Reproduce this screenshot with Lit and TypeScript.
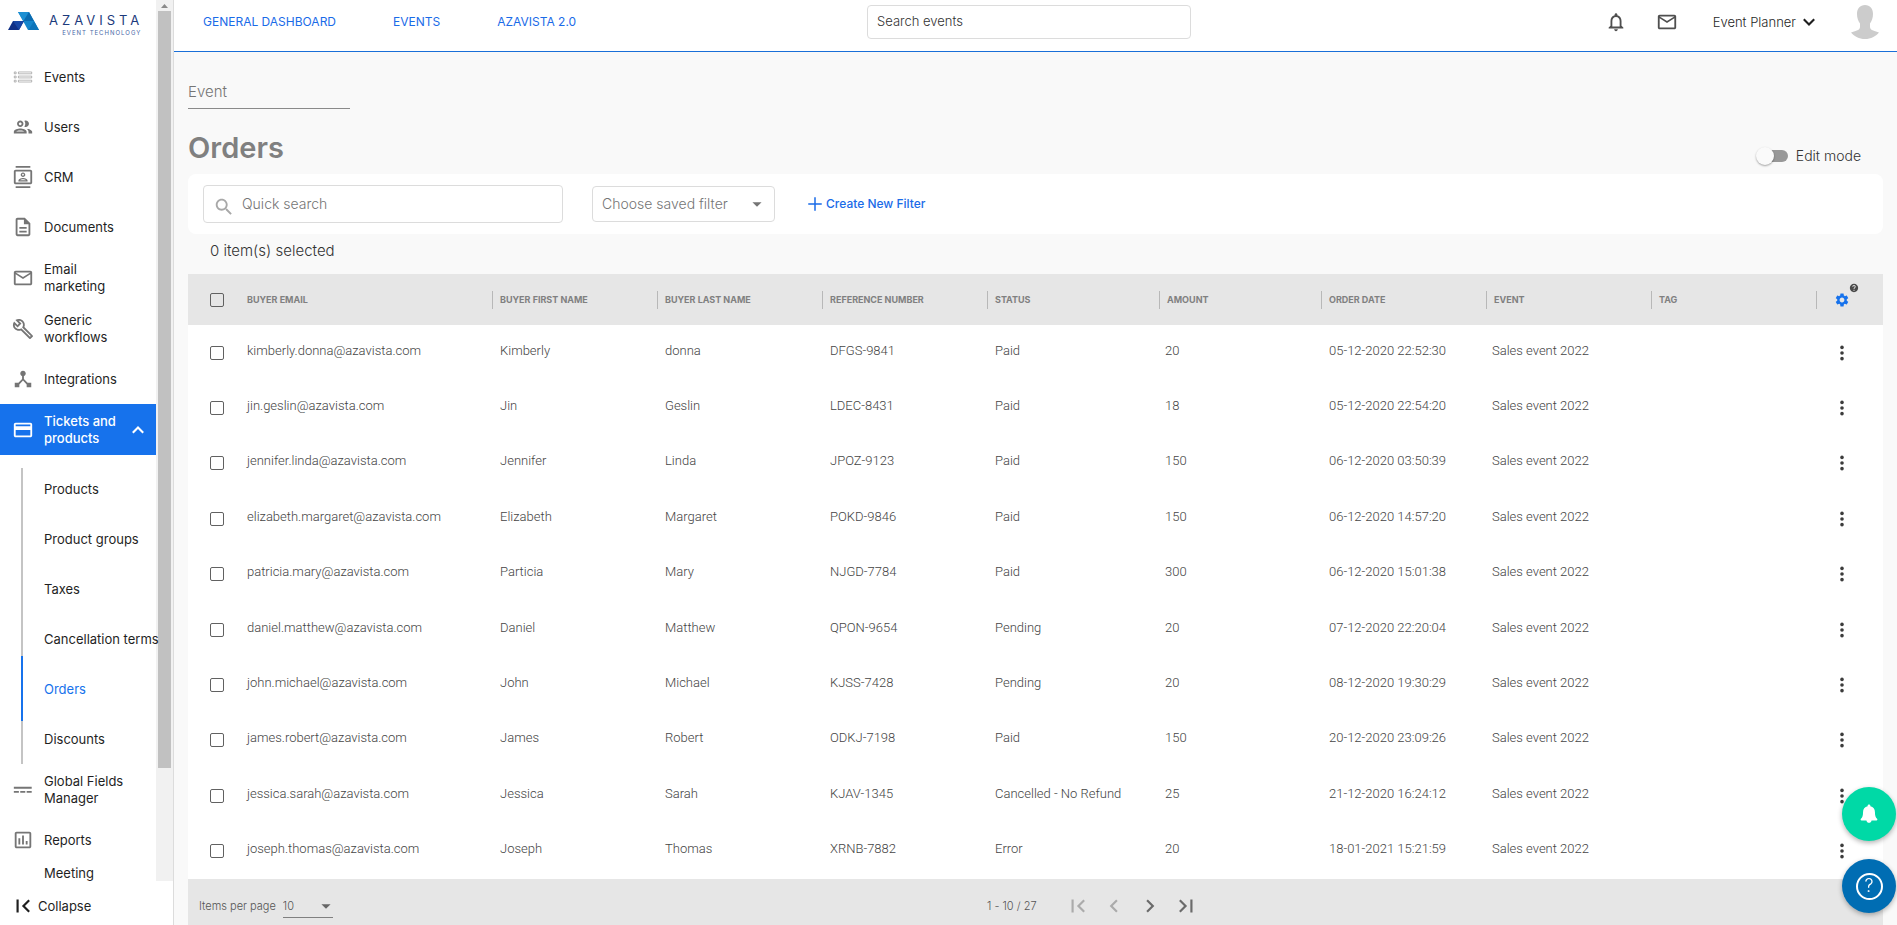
import { LitElement, html, css, svg, nothing } from "lit";
import { customElement, state } from "lit/decorators.js";
import { classMap } from "lit/directives/class-map.js";

type Order = [string, string, string, string, string, string, string];

const ORDERS: Order[] = [
  ["kimberly.donna@azavista.com", "Kimberly", "donna", "DFGS-9841", "Paid", "20", "05-12-2020 22:52:30"],
  ["jin.geslin@azavista.com", "Jin", "Geslin", "LDEC-8431", "Paid", "18", "05-12-2020 22:54:20"],
  ["jennifer.linda@azavista.com", "Jennifer", "Linda", "JPOZ-9123", "Paid", "150", "06-12-2020 03:50:39"],
  ["elizabeth.margaret@azavista.com", "Elizabeth", "Margaret", "POKD-9846", "Paid", "150", "06-12-2020 14:57:20"],
  ["patricia.mary@azavista.com", "Particia", "Mary", "NJGD-7784", "Paid", "300", "06-12-2020 15:01:38"],
  ["daniel.matthew@azavista.com", "Daniel", "Matthew", "QPON-9654", "Pending", "20", "07-12-2020 22:20:04"],
  ["john.michael@azavista.com", "John", "Michael", "KJSS-7428", "Pending", "20", "08-12-2020 19:30:29"],
  ["james.robert@azavista.com", "James", "Robert", "ODKJ-7198", "Paid", "150", "20-12-2020 23:09:26"],
  ["jessica.sarah@azavista.com", "Jessica", "Sarah", "KJAV-1345", "Cancelled - No Refund", "25", "21-12-2020 16:24:12"],
  ["joseph.thomas@azavista.com", "Joseph", "Thomas", "XRNB-7882", "Error", "20", "18-01-2021 15:21:59"],
];

const HEADERS = [
  "Buyer email",
  "Buyer first name",
  "Buyer last name",
  "Reference number",
  "Status",
  "Amount",
  "Order date",
  "Event",
  "Tag",
];

const PATHS = {
  events: svg`<g fill="none" stroke="currentColor" stroke-width="1" opacity=".55"><path d="M2.500 6.500h2v2h-2zM7 6.500h14.500v2H7zM2.500 11h2v2h-2zM7 11h14.500v2H7zM2.500 15.500h2v2h-2zM7 15.500h14.500v2H7z"/></g>`,
  users: svg`<path d="M9 13.750c-2.340 0-7 1.170-7 3.500V19h14v-1.750c0-2.330-4.660-3.500-7-3.500zM4.340 17c.84-.58 2.870-1.250 4.660-1.250s3.820.67 4.660 1.250H4.340zM9 12c1.930 0 3.500-1.570 3.500-3.500S10.930 5 9 5 5.500 6.570 5.500 8.500 7.070 12 9 12zm0-5c.83 0 1.500.67 1.500 1.500S9.830 10 9 10s-1.500-.67-1.500-1.500S8.170 7 9 7zm7.040 6.810c1.160.84 1.960 1.960 1.960 3.440V19h4v-1.750c0-2.020-3.500-3.170-5.960-3.440zM15 12c1.930 0 3.500-1.570 3.500-3.500S16.930 5 15 5c-.54 0-1.040.13-1.500.35.63.89 1 1.980 1 3.150s-.37 2.260-1 3.150c.46.22.96.35 1.500.35z"/>`,
  crm: svg`<path d="M20 4H4c-1.100 0-2 .9-2 2v12c0 1.100.9 2 2 2h16c1.100 0 2-.9 2-2V6c0-1.100-.9-2-2-2zm0 14H4V6h16v12zM4 0h16v2H4zm0 22h16v2H4zm8-10c1.380 0 2.500-1.120 2.500-2.500S13.380 7 12 7 9.500 8.120 9.500 9.500 10.620 12 12 12zm0-3.500c.55 0 1 .45 1 1s-.45 1-1 1-1-.45-1-1 .45-1 1-1zm5 7.490C17 13.900 13.690 13 12 13s-5 .9-5 2.990V17h10v-1.010zm-8.190-.49c.61-.52 2.030-1 3.190-1 1.170 0 2.590.48 3.200 1H8.810z"/>`,
  documents: svg`<path d="M8 16h8v2H8zm0-4h8v2H8zm6-10H6c-1.100 0-2 .9-2 2v16c0 1.100.89 2 1.990 2H18c1.100 0 2-.9 2-2V8l-6-6zm4 18H6V4h7v5h5v11z"/>`,
  mail: svg`<path d="M22 6c0-1.100-.9-2-2-2H4c-1.100 0-2 .9-2 2v12c0 1.100.9 2 2 2h16c1.100 0 2-.9 2-2V6zm-2 0-8 5-8-5h16zm0 12H4V8l8 5 8-5v10z"/>`,
  wrench: svg`<path d="m22.610 18.990-9.080-9.080c.93-2.340.45-5.100-1.440-7C9.790.61 6.210.4 3.660 2.260L7.500 6.110 6.080 7.520 2.250 3.690C.39 6.230.6 9.820 2.900 12.110c1.860 1.860 4.570 2.350 6.890 1.480l9.110 9.110c.39.39 1.020.39 1.410 0l2.300-2.300c.4-.38.4-1.010 0-1.410zm-3 1.600-9.460-9.460c-.61.45-1.290.72-2 .82-1.360.2-2.790-.21-3.830-1.250C3.370 9.760 2.930 8.500 3 7.260l3.090 3.090 4.240-4.240-3.090-3.090c1.240-.07 2.490.37 3.440 1.310 1.080 1.080 1.490 2.570 1.240 3.960-.12.71-.42 1.370-.88 1.960l9.450 9.450-.88.89z"/>`,
  hub: svg`<path d="m17 16-4-4V8.820C14.160 8.400 15 7.300 15 6c0-1.660-1.340-3-3-3S9 4.340 9 6c0 1.300.84 2.400 2 2.820V12l-4 4H3v5h5v-3.050l4-4.200 4 4.200V21h5v-5h-4z"/>`,
  card: svg`<path d="M20 4H4c-1.110 0-1.990.89-1.990 2L2 18c0 1.110.89 2 2 2h16c1.110 0 2-.89 2-2V6c0-1.110-.89-2-2-2zm0 14H4v-6h16v6zm0-10H4V6h16v2z"/>`,
  fields: svg`<path d="M2 8.500h19.500v2H2zM2 13h5.500v2H2zm7 0h5.500v2H9zm7 0h5.500v2H16z"/>`,
  reports: svg`<path d="M9 17H7v-7h2v7zm4 0h-2V7h2v10zm4 0h-2v-4h2v4zm2 2H5V5h14v14zm0-16H5c-1.100 0-2 .9-2 2v14c0 1.100.9 2 2 2h14c1.100 0 2-.9 2-2V5c0-1.100-.9-2-2-2z"/>`,
  bell: svg`<path d="M12 22c1.100 0 2-.9 2-2h-4c0 1.100.9 2 2 2zm6-6v-5c0-3.070-1.630-5.640-4.500-6.320V4c0-.83-.67-1.500-1.500-1.500s-1.500.67-1.500 1.500v.68C7.640 5.360 6 7.920 6 11v5l-2 2v1h16v-1l-2-2zm-2 1H8v-6c0-2.480 1.510-4.500 4-4.500s4 2.020 4 4.500v6z"/>`,
  bellSolid: svg`<path d="M12 1.500c-.9 0-1.500.6-1.500 1.500v.6C7.300 4.300 5.500 6.900 5.500 10c0 3.600-.7 5.700-2.300 7.100-.7.600-.3 1.900.6 1.900h5.400c.3 1.500 1.400 2.500 2.800 2.500s2.500-1 2.800-2.500h5.400c.9 0 1.300-1.300.6-1.900-1.600-1.400-2.300-3.500-2.300-7.100 0-3.100-1.800-5.700-5-6.400V3c0-.9-.6-1.500-1.500-1.500z"/>`,
  down: svg`<path d="M7.100 8.200 12 13.100l4.900-4.900L18.500 9.800 12 16.300 5.500 9.800z"/>`,
  up: svg`<path d="M7.100 15.800 12 10.900l4.900 4.900 1.600-1.600L12 7.700l-6.500 6.500z"/>`,
  caret: svg`<path d="m7 10 5 5 5-5z"/>`,
  search: svg`<path d="M15.500 14h-.79l-.28-.27C15.410 12.590 16 11.110 16 9.500 16 5.910 13.090 3 9.500 3S3 5.910 3 9.500 5.910 16 9.500 16c1.610 0 3.090-.59 4.230-1.570l.27.28v.79l5 4.990L20.490 19l-4.990-5zm-6 0C7.010 14 5 11.990 5 9.500S7.010 5 9.500 5 14 7.010 14 9.500 11.990 14 9.500 14z"/>`,
  plus: svg`<path d="M21 13h-8v8h-2v-8H3v-2h8V3h2v8h8z"/>`,
  gear: svg`<path d="M19.140 12.940c.04-.3.060-.61.060-.94 0-.32-.02-.64-.07-.94l2.030-1.580c.18-.14.23-.41.120-.61l-1.920-3.320c-.12-.22-.37-.29-.59-.22l-2.390.96c-.5-.38-1.030-.7-1.620-.94l-.36-2.540c-.04-.24-.24-.41-.48-.41h-3.840c-.24 0-.43.17-.47.41l-.36 2.540c-.59.24-1.130.57-1.620.94l-2.390-.96c-.22-.08-.47 0-.59.22L2.740 8.870c-.12.21-.08.47.120.61l2.030 1.580c-.05.3-.09.63-.09.94s.02.64.07.94l-2.030 1.580c-.18.14-.23.41-.12.61l1.920 3.320c.12.22.37.29.59.22l2.390-.96c.5.38 1.030.7 1.620.94l.36 2.540c.05.24.24.41.48.41h3.840c.24 0 .44-.17.47-.41l.36-2.540c.59-.24 1.130-.56 1.620-.94l2.390.96c.22.080.47 0 .59-.22l1.920-3.320c.12-.22.070-.47-.12-.61l-2.010-1.580zM12 15.600c-1.980 0-3.600-1.620-3.600-3.600s1.620-3.600 3.600-3.600 3.600 1.620 3.600 3.600-1.620 3.600-3.600 3.600z"/>`,
  help: svg`<path d="M12 2C6.480 2 2 6.480 2 12s4.480 10 10 10 10-4.480 10-10S17.520 2 12 2zm1 17h-2v-2h2v2zm2.070-7.750-.9.920C13.450 12.900 13 13.500 13 15h-2v-.5c0-1.100.45-2.100 1.170-2.830l1.240-1.260c.37-.36.59-.86.59-1.410 0-1.100-.9-2-2-2s-2 .9-2 2H8c0-2.210 1.790-4 4-4s4 1.790 4 4c0 .88-.36 1.680-.93 2.250z"/>`,
  dots: svg`<circle cx="12" cy="4.500" r="2.400"/><circle cx="12" cy="12" r="2.400"/><circle cx="12" cy="19.500" r="2.400"/>`,
  first: svg`<path d="M18.410 16.590 13.820 12l4.590-4.590L17 6l-6 6 6 6zM6 6h2v12H6z"/>`,
  prev: svg`<path d="M15.410 7.410 14 6l-6 6 6 6 1.410-1.410L10.830 12z"/>`,
  next: svg`<path d="M10 6 8.590 7.410 13.170 12l-4.580 4.590L10 18l6-6z"/>`,
  last: svg`<path d="M5.590 7.410 10.180 12l-4.590 4.590L7 18l6-6-6-6zM16 6h2v12h-2z"/>`,
};

const icon = (name: keyof typeof PATHS, size = "") =>
  html`<svg class="icon ${size}" viewBox="0 0 24 24" aria-hidden="true">${PATHS[name]}</svg>`;

const base = css`
  :host {
    font-family: Inter, "Open Sans", sans-serif;
    box-sizing: border-box;
  }
  *,
  *::before,
  *::after {
    box-sizing: border-box;
  }
  .icon {
    display: block;
    flex: none;
    width: 22px;
    height: 22px;
    fill: currentColor;
  }
  .icon.s10 { width: 10px; height: 10px; }
  .icon.s16 { width: 16px; height: 16px; }
  .icon.s18 { width: 18px; height: 18px; }
  .icon.s26 { width: 26px; height: 26px; }
  button,
  input,
  select {
    font: inherit;
    color: inherit;
    margin: 0;
    padding: 0;
    border: 0;
    background: none;
    outline: 0;
  }
  button { cursor: pointer; }
  a { color: inherit; text-decoration: none; }
  ul { list-style: none; margin: 0; padding: 0; }
`;

@customElement("side-nav")
class SideNav extends LitElement {
  static styles = [
    base,
    css`
      :host {
        display: flex;
        flex-direction: column;
        width: 174px;
        min-height: 0;
        background: #fff;
        border-right: 1px solid #dcdcdc;
        font-size: 13px;
        line-height: 17px;
        color: #1f1f1f;
      }
      .scroll { display: flex; flex: 1; min-height: 0; overflow: hidden; }
      .content { flex: 1; min-width: 0; }
      .logo {
        display: flex;
        align-items: flex-start;
        gap: 10px;
        height: 52px;
        padding: 12px 0 0 8px;
      }
      .mark { width: 31px; height: 18px; display: block; }
      .brand {
        display: flex;
        flex-direction: column;
        align-items: flex-end;
        color: #1c3a7c;
      }
      .name { font-size: 13px; line-height: 17px; letter-spacing: 4px; }
      .tag { padding-right: 2px; font-size: 6px; line-height: 7px; letter-spacing: 1px; color: #4a68a8; }
      .item {
        display: flex;
        align-items: center;
        gap: 10px;
        min-height: 50px;
        padding: 8px 20px 8px 12px;
      }
      .item.tall { min-height: 51px; }
      .item .icon { color: #757575; }
      .item .label { flex: 1; }
      .item.active { background: #1672ec; color: #fff; font-weight: 500; padding-right: 7px; }
      .item.active .icon { color: #fff; }
      .item.cut { align-items: flex-start; padding: 0 0 0 44px; }
      .sub { position: relative; padding-top: 9px; }
      .sub::before {
        content: "";
        position: absolute;
        left: 21px;
        top: 13px;
        bottom: 0;
        width: 2px;
        background: #c4c4c4;
      }
      .sub a {
        position: relative;
        display: flex;
        align-items: center;
        height: 50px;
        padding-left: 44px;
        white-space: nowrap;
      }
      .sub a.current { color: #1672ec; }
      .sub a.current::before {
        content: "";
        position: absolute;
        left: 21px;
        top: -8px;
        bottom: -7px;
        width: 2px;
        background: #1672ec;
      }
      .bar {
        display: flex;
        flex-direction: column;
        align-items: center;
        width: 17px;
        padding: 3px 2px 0;
        background: #f1f1f1;
      }
      .arrow { width: 7px; height: 8px; fill: #8a8a8a; display: block; }
      .track { flex: 1; width: 13px; }
      .thumb { height: 87%; background: #c1c1c1; }
      .collapse {
        display: flex;
        align-items: center;
        gap: 2px;
        height: 44px;
        padding: 6px 0 0 10px;
        text-align: left;
      }
    `,
  ];

  private item(name: keyof typeof PATHS, label: string, tall = false) {
    return html`<a class=${classMap({ item: true, tall })} href="#">${icon(name)}<span class="label">${label}</span></a>`;
  }

  render() {
    return html`
      <div class="scroll">
        <nav class="content">
          <a class="logo" href="#">
            <svg class="mark" viewBox="0 0 31 18" aria-hidden="true">
              <path fill="#1586cc" d="M10 0h11l10 18H20z" />
              <path fill="#1c8fd2" d="M10 0h11l-5.500 9z" />
              <path fill="#0a6bb0" d="M21 0l5 9H15.500z" />
              <path fill="#0a6bb0" d="M26 9l5 18H20z" opacity="0" />
              <path fill="#0d74ba" d="M26 9l5 9H20.500z" />
              <path fill="#0f2f86" d="M5 9h11l-5 9H0z" />
              <path fill="#1746a5" d="M5 9h11l-5 9z" />
            </svg>
            <span class="brand"><span class="name">AZAVISTA</span><span class="tag">EVENT TECHNOLOGY</span></span>
          </a>
          ${this.item("events", "Events")} ${this.item("users", "Users")} ${this.item("crm", "CRM")}
          ${this.item("documents", "Documents")} ${this.item("mail", "Email marketing", true)}
          ${this.item("wrench", "Generic workflows", true)} ${this.item("hub", "Integrations")}
          <a class="item tall active" href="#">${icon("card")}<span class="label">Tickets and products</span>${icon("up")}</a>
          <ul class="sub">
            ${["Products", "Product groups", "Taxes", "Cancellation terms", "Orders", "Discounts"].map(
              (t) => html`<li><a class=${classMap({ current: t === "Orders" })} href="#">${t}</a></li>`
            )}
          </ul>
          ${this.item("fields", "Global Fields Manager", true)} ${this.item("reports", "Reports")}
          <a class="item cut" href="#">Meeting</a>
        </nav>
        <div class="bar">
          <svg class="arrow" viewBox="0 0 7 8" aria-hidden="true"><path d="M0 5 3.500 1 7 5z" /></svg>
          <div class="track"><div class="thumb"></div></div>
        </div>
      </div>
      <button class="collapse">${icon("first", "s26")}Collapse</button>
    `;
  }
}

@customElement("top-bar")
class TopBar extends LitElement {
  static styles = [
    base,
    css`
      :host {
        display: grid;
        grid-template-columns: 665fr 324px 691fr;
        height: 52px;
        padding: 5px 16px 0 29px;
        background: #fff;
        border-bottom: 1px solid #1a6fd8;
        font-size: 13px;
        line-height: 34px;
        color: #1f1f1f;
      }
      .links { display: flex; gap: 57px; font-size: 12px; color: #1a6be8; }
      .search {
        height: 34px;
        padding: 0 9px 3px;
        border: 1px solid #dcdcdc;
        border-radius: 4px;
        font-weight: 300;
      }
      .search::placeholder { color: #333; opacity: 1; }
      .right { display: flex; justify-content: flex-end; align-items: center; height: 34px; }
      .right button { display: flex; align-items: center; }
      .round { color: #4f4f4f; }
      .mail { margin: 0 35px 0 29px; }
      .user { gap: 2px; margin-right: 29px; font-weight: 300; }
      .avatar { width: 32px; height: 36px; fill: #ccc; display: block; }
    `,
  ];
  render() {
    return html`
      <nav class="links"><a href="#">GENERAL DASHBOARD</a><a href="#">EVENTS</a><a href="#">AZAVISTA 2.0</a></nav>
      <input class="search" type="search" placeholder="Search events" aria-label="Search events" />
      <div class="right">
        <button class="round" aria-label="Notifications">${icon("bell")}</button>
        <button class="round mail" aria-label="Messages">${icon("mail")}</button>
        <button class="user">Event Planner ${icon("down")}</button>
        <svg class="avatar" viewBox="0 0 32 36" aria-hidden="true">
          <path d="M16 1c-5 0-8 3.500-8 9 0 4 1.200 7 3 9.500V23c0 2-1.500 3.200-4.500 4L2 28.500C5.500 32.500 10 35 16 35s10.500-2.500 14-6.500L25.500 27c-3-.8-4.500-2-4.500-4v-3.500c1.800-2.500 3-5.500 3-9.500 0-5.500-3-9-8-9z" />
        </svg>
      </div>
    `;
  }
}

@customElement("orders-table")
class OrdersTable extends LitElement {
  static styles = [
    base,
    css`
      :host {
        display: flex;
        flex-direction: column;
        flex: 1;
        min-height: 0;
        font-size: 13px;
        line-height: 18px;
        color: #444;
      }
      .body { flex: 1; min-height: 0; background: #fff; }
      table { width: 100%; height: 100%; table-layout: fixed; border-collapse: collapse; }
      .c-check { width: 59px; }
      .c-email { width: 245px; }
      .c-text { width: 165px; }
      .c-status { width: 172px; }
      .c-amount { width: 162px; }
      .c-act { width: 67px; }
      th, td { padding: 0; text-align: left; white-space: nowrap; font-weight: 300; }
      thead th { height: 51px; background: #e6e6e6; }
      tbody td { height: 55px; padding: 0 0 4px 8px; font-family: Roboto, Inter, sans-serif; }
      tbody .email { padding-left: 0; }
      tbody .near { padding-left: 6px; }
      tbody .pick, tbody .act { padding-bottom: 0; }
      .head {
        display: block;
        padding-left: 7px;
        border-left: 1px solid #b8b8b8;
        font-size: 9px;
        font-weight: 700;
        text-transform: uppercase;
        color: #808080;
      }
      .head.plain { padding-left: 0; border-left: 0; }
      .pick, tbody .pick { padding-left: 22px; }
      .box {
        appearance: none;
        display: block;
        width: 14px;
        height: 14px;
        border: 1px solid #616161;
        border-radius: 2px;
      }
      .box:checked { background: #1672ec; border-color: #1672ec; }
      .tools { display: flex; height: 18px; align-items: center; border-left: 1px solid #b8b8b8; padding-left: 17px; }
      .gear { position: relative; color: #1672ec; }
      .hint { position: absolute; left: 15px; top: -9px; color: #4a4a4a; }
      tbody .act { padding-left: 17px; }
      .menu { display: block; color: #3c3c3c; }
      footer {
        display: grid;
        grid-template-columns: 799fr 896fr;
        align-items: center;
        height: 46px;
        padding-top: 8px;
        background: #e6e6e6;
        font-size: 11px;
        font-weight: 300;
        color: #555;
      }
      .size { display: flex; align-items: center; gap: 7px; padding-left: 11px; }
      .drop { position: relative; display: block; width: 50px; border-bottom: 1px solid #808080; }
      .drop select { appearance: none; width: 100%; height: 22px; }
      .drop .icon { position: absolute; right: -4px; top: 0; pointer-events: none; color: #666; }
      .pager { display: flex; align-items: center; gap: 10px; }
      .pager button { color: #6b6b6b; }
      .pager button:disabled { color: #ababab; }
      .pager .range { margin-right: 18px; }
    `,
  ];
  render() {
    return html`
      <div class="body">
        <table>
          <colgroup>
            <col class="c-check" /><col class="c-email" /><col class="c-text" /><col class="c-text" /><col class="c-text" />
            <col class="c-status" /><col class="c-amount" /><col class="c-text" /><col class="c-text" /><col class="c-text" />
            <col class="c-act" />
          </colgroup>
          <thead>
            <tr>
              <th class="pick"><input class="box" type="checkbox" aria-label="Select all" /></th>
              ${HEADERS.map((h, i) => html`<th scope="col"><span class=${classMap({ head: true, plain: i === 0 })}>${h}</span></th>`)}
              <th>
                <div class="tools">
                  <button class="gear" aria-label="Table settings">
                    ${icon("gear", "s16")}<span class="hint">${icon("help", "s10")}</span>
                  </button>
                </div>
              </th>
            </tr>
          </thead>
          <tbody>
            ${ORDERS.map(
              ([email, first, last, ref, status, amount, date]) => html`<tr>
                <td class="pick"><input class="box" type="checkbox" aria-label="Select ${email}" /></td>
                <td class="email">${email}</td>
                <td>${first}</td>
                <td>${last}</td>
                <td>${ref}</td>
                <td>${status}</td>
                <td class="near">${amount}</td>
                <td>${date}</td>
                <td class="near">Sales event 2022</td>
                <td>${nothing}</td>
                <td class="act"><button class="menu" aria-label="Actions for ${email}">${icon("dots", "s18")}</button></td>
              </tr>`
            )}
          </tbody>
        </table>
      </div>
      <footer>
        <div class="size">
          <label for="size">Items per page</label>
          <span class="drop"
            ><select id="size"><option>10</option><option>25</option></select>${icon("caret")}</span
          >
        </div>
        <div class="pager">
          <span class="range">1 - 10 / 27</span>
          <button disabled aria-label="First page">${icon("first", "s26")}</button>
          <button disabled aria-label="Previous page">${icon("prev", "s26")}</button>
          <button aria-label="Next page">${icon("next", "s26")}</button>
          <button aria-label="Last page">${icon("last", "s26")}</button>
        </div>
      </footer>
    `;
  }
}

@customElement("app-root")
class AppRoot extends LitElement {
  @state() private editing = false;

  static styles = [
    base,
    css`
      :host {
        display: grid;
        grid-template-columns: auto minmax(0, 1fr);
        grid-template-rows: minmax(0, 1fr);
        height: 100vh;
        overflow: hidden;
        background: #f9f9f9;
        color: #333;
        font-size: 15px;
        line-height: 20px;
      }
      .page { display: flex; flex-direction: column; min-height: 0; min-width: 0; }
      main { display: flex; flex-direction: column; flex: 1; min-height: 0; padding: 28px 14px 0; }
      .event {
        align-self: flex-start;
        width: 162px;
        height: 29px;
        padding-bottom: 6px;
        border-bottom: 1px solid #8a8a8a;
        font-weight: 300;
      }
      ::placeholder { color: #757575; opacity: 1; }
      .title { display: flex; align-items: flex-end; justify-content: space-between; height: 65px; padding: 0 22px 8px 0; }
      h1 { margin: 0; font-size: 29px; line-height: 36px; font-weight: 600; color: #808080; }
      .edit { display: flex; align-items: center; gap: 8px; font-size: 14px; font-weight: 300; }
      .toggle {
        appearance: none;
        position: relative;
        width: 32px;
        height: 20px;
        cursor: pointer;
      }
      .toggle::before {
        content: "";
        position: absolute;
        inset: 4px 0 4px 2px;
        border-radius: 6px;
        background: #989898;
      }
      .toggle::after {
        content: "";
        position: absolute;
        left: 0;
        top: 1px;
        width: 18px;
        height: 18px;
        border-radius: 50%;
        background: #fafafa;
        box-shadow: 0 1px 2px rgba(0, 0, 0, 0.35);
      }
      .toggle:checked::after { left: 14px; background: #1672ec; }
      .filters {
        display: flex;
        align-items: center;
        height: 60px;
        padding: 0 15px;
        border-radius: 8px;
        background: #fff;
        font-size: 14px;
        font-weight: 300;
        color: #757575;
      }
      .quick {
        display: flex;
        align-items: center;
        gap: 7px;
        width: 360px;
        height: 38px;
        padding: 0 9px;
        border: 1px solid #dcdcdc;
        border-radius: 4px;
      }
      .quick .icon { color: #a8a8a8; margin-top: 5px; }
      .quick input { flex: 1; min-width: 0; }
      .saved { position: relative; width: 183px; margin: 0 31px 0 29px; }
      .saved select {
        appearance: none;
        width: 100%;
        height: 36px;
        padding: 0 9px;
        border: 1px solid #dcdcdc;
        border-radius: 4px;
      }
      .saved .icon { position: absolute; right: 7px; top: 7px; pointer-events: none; }
      .create {
        display: flex;
        align-items: center;
        gap: 2px;
        font-size: 12px;
        font-weight: 500;
        color: #1a6be8;
      }
      .count { margin: 0; padding: 7px 22px 13px; font-weight: 300; }
      .float {
        position: fixed;
        right: 1px;
        bottom: 12px;
        display: flex;
        flex-direction: column;
        gap: 18px;
      }
      .float button {
        display: grid;
        place-items: center;
        width: 54px;
        height: 54px;
        border-radius: 50%;
        color: #fff;
        background: #00d9a6;
        box-shadow: 0 2px 5px rgba(0, 0, 0, 0.3);
      }
      .float .ask { background: #006db3; }
      .ring {
        display: grid;
        place-items: center;
        width: 27px;
        height: 27px;
        border: 2px solid #fff;
        border-radius: 50%;
        font-size: 18px;
        font-weight: 300;
      }
    `,
  ];

  render() {
    return html`
      <side-nav></side-nav>
      <div class="page">
        <top-bar></top-bar>
        <main>
          <input class="event" placeholder="Event" aria-label="Event" />
          <div class="title">
            <h1>Orders</h1>
            <label class="edit"
              ><input
                class="toggle"
                type="checkbox"
                .checked=${this.editing}
                @change=${(e: Event) => (this.editing = (e.target as HTMLInputElement).checked)}
              />Edit mode</label
            >
          </div>
          <div class="filters">
            <label class="quick">${icon("search")}<input placeholder="Quick search" aria-label="Quick search" /></label>
            <div class="saved">
              <select aria-label="Choose saved filter"><option>Choose saved filter</option></select>${icon("caret")}
            </div>
            <button class="create">${icon("plus", "s18")}Create New Filter</button>
          </div>
          <p class="count">0 item(s) selected</p>
          <orders-table></orders-table>
        </main>
      </div>
      <div class="float">
        <button aria-label="Alerts">${icon("bellSolid")}</button>
        <button class="ask" aria-label="Help"><span class="ring">?</span></button>
      </div>
    `;
  }
}
